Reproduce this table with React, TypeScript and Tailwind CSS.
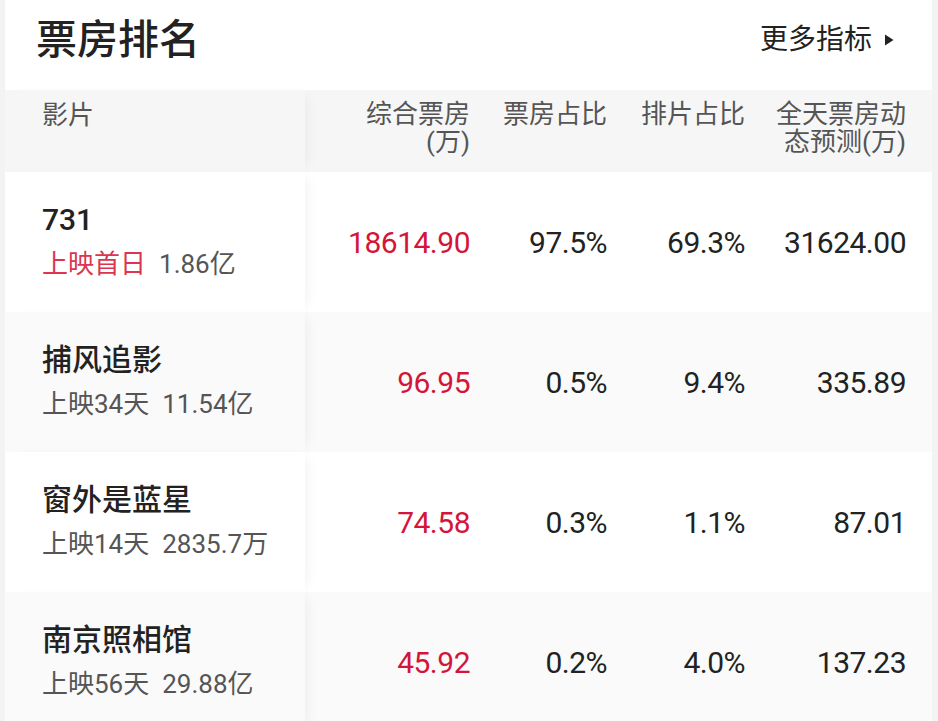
const rows = [
  {
    name: "731",
    tag: "上映首日",
    tagRed: true,
    total: "1.86亿",
    box: "18614.90",
    boxRate: "97.5%",
    showRate: "69.3%",
    forecast: "31624.00",
  },
  {
    name: "捕风追影",
    tag: "上映34天",
    tagRed: false,
    total: "11.54亿",
    box: "96.95",
    boxRate: "0.5%",
    showRate: "9.4%",
    forecast: "335.89",
  },
  {
    name: "窗外是蓝星",
    tag: "上映14天",
    tagRed: false,
    total: "2835.7万",
    box: "74.58",
    boxRate: "0.3%",
    showRate: "1.1%",
    forecast: "87.01",
  },
  {
    name: "南京照相馆",
    tag: "上映56天",
    tagRed: false,
    total: "29.88亿",
    box: "45.92",
    boxRate: "0.2%",
    showRate: "4.0%",
    forecast: "137.23",
  },
];

const font = "font-['Roboto','Noto_Sans_CJK_SC',sans-serif]";
const cols = "grid grid-cols-[300px_165px_137px_138px_161px] pr-[26px]";

const App = () => {
  return (
    <div
      className={`w-[938px] h-[721px] overflow-hidden bg-[#f3f3f3] pl-[5px] ${font}`}
    >
      <div className="w-[927px] h-full bg-white flex flex-col">
        {/* Title bar */}
        <div className="h-[90px] shrink-0 flex items-center justify-between pl-[31px] pr-[38px] pb-[10px]">
          <h1 className="text-[41px] font-medium text-[#222] leading-none">
            票房排名
          </h1>
          <button className="flex items-center gap-[12px] text-[28px] text-[#222] leading-none">
            更多指标
            <svg width="10" height="12" viewBox="0 0 10 12">
              <path d="M1 0.5 L9.5 6 L1 11.5 Z" fill="#222" />
            </svg>
          </button>
        </div>

        {/* Table header */}
        <div
          className={`${cols} h-[82px] shrink-0 bg-[#f6f6f6] text-[26px] leading-[28px] text-[#555]`}
        >
          <div className="relative z-10 pl-[37px] pt-[11px] bg-[#f6f6f6] shadow-[8px_0_12px_-6px_rgba(0,0,0,0.06)]">
            影片
          </div>
          <div className="text-right pt-[10px]">
            <div>综合票房</div>
            <div>(万)</div>
          </div>
          <div className="text-right pt-[10px]">票房占比</div>
          <div className="text-right pt-[10px]">排片占比</div>
          <div className="text-right pt-[10px]">
            <div>全天票房动</div>
            <div>态预测(万)</div>
          </div>
        </div>

        {/* Rows */}
        {rows.map((r, i) => {
          const bg = i % 2 === 0 ? "bg-white" : "bg-[#fafafa]";
          return (
            <div key={r.name} className={`${cols} h-[140px] shrink-0 ${bg}`}>
              <div
                className={`relative z-10 ${bg} pl-[37px] flex flex-col justify-center gap-[8px] shadow-[8px_0_12px_-6px_rgba(0,0,0,0.06)]`}
              >
                <div className="text-[30px] leading-[36px] font-medium text-[#222]">
                  {r.name}
                </div>
                <div className="text-[26px] leading-[36px] text-[#555] flex gap-[13px]">
                  <span className={r.tagRed ? "text-[#dc3550]" : ""}>
                    {r.tag}
                  </span>
                  <span>{r.total}</span>
                </div>
              </div>
              <div className="flex items-center justify-end text-[30px] tracking-[-0.5px] text-[#d3153a]">
                {r.box}
              </div>
              <div className="flex items-center justify-end text-[30px] tracking-[-0.5px] text-[#222]">
                {r.boxRate}
              </div>
              <div className="flex items-center justify-end text-[30px] tracking-[-0.5px] text-[#222]">
                {r.showRate}
              </div>
              <div className="flex items-center justify-end text-[30px] tracking-[-0.5px] text-[#222]">
                {r.forecast}
              </div>
            </div>
          );
        })}
      </div>
    </div>
  );
};

export default App;
